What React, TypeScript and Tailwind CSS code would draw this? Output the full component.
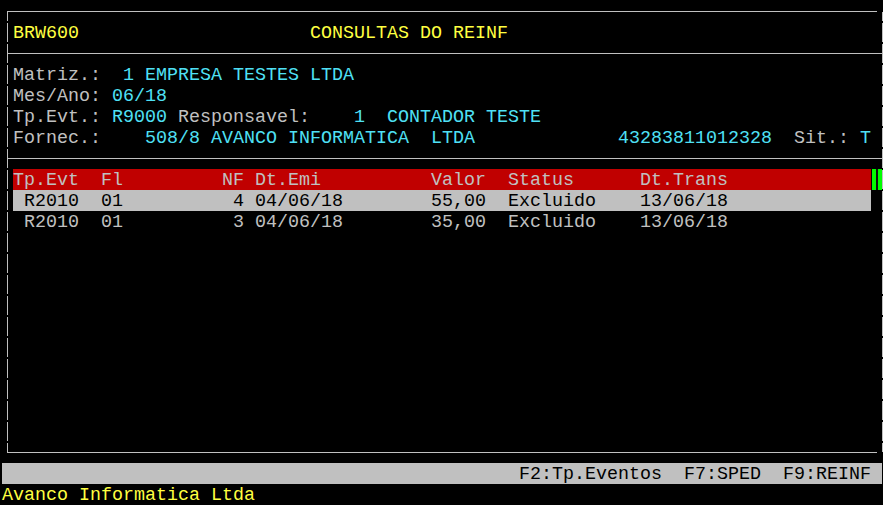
import type { ReactNode } from 'react'

const gray = 'text-[#c0c0c0]'
const cyan = 'text-[#4fe0f5]'
const yellow = 'text-[#ffff40]'

// one 80-col terminal row, 21px high
function Line({ children, className = '' }: { children?: ReactNode; className?: string }) {
  return <div className={`h-[21px] pt-px leading-[21px] whitespace-pre pl-[5px] ${className}`}>{children}</div>
}

function Sep() {
  return (
    <div className="h-[21px] pt-[10px]">
      <div className="h-px bg-[#c0c0c0]" />
    </div>
  )
}

const vline =
  'w-px shrink-0 bg-[image:repeating-linear-gradient(to_bottom,#c0c0c0_0px,#c0c0c0_9px,transparent_9px,transparent_11px,#c0c0c0_11px,#c0c0c0_21px)]'

export default function App() {
  return (
    <div className="w-[883px] h-[505px] bg-black pt-px pl-[2px] overflow-hidden font-['Liberation_Mono',monospace] text-[18.33px] leading-[21px]">
      <div className="ml-[5px] mt-[10px] w-[870px] h-[442px] border-y border-[#c0c0c0] flex">
        <div className={vline} />
        <div className="flex-1 flex flex-col pt-[10px]">
          <Line className={yellow}>{'BRW600                     CONSULTAS DO REINF'}</Line>
          <Sep />
          <Line className={gray}>
            {'Matriz.:  '}
            <span className={cyan}>1 EMPRESA TESTES LTDA</span>
          </Line>
          <Line className={gray}>
            {'Mes/Ano: '}
            <span className={cyan}>06/18</span>
          </Line>
          <Line className={gray}>
            {'Tp.Evt.: '}
            <span className={cyan}>R9000</span>
            {' Responsavel:'}
            <span className={cyan}>{'    1  CONTADOR TESTE'}</span>
          </Line>
          <Line className={gray}>
            {'Fornec.:    '}
            <span className={cyan}>{'508/8 AVANCO INFORMATICA  LTDA             43283811012328'}</span>
            {'  Sit.: '}
            <span className={cyan}>T</span>
          </Line>
          <Sep />
          <div className="h-[21px] flex">
            <div className={`ml-[5px] w-[858px] shrink-0 pt-px bg-[#c00000] whitespace-pre ${gray}`}>
              {'Tp.Evt  Fl         NF Dt.Emi          Valor  Status      Dt.Trans'}
            </div>
            <div className="relative ml-px w-[10px] shrink-0 bg-[#00ff00] flex">
              <div className="ml-[4px] w-[2px] bg-[#101010]" />
            </div>
          </div>
          <div className="h-[21px] flex">
            <div className="ml-[5px] w-[858px] shrink-0 pt-px bg-[#c0c0c0] text-black whitespace-pre">
              {' R2010  01          4 04/06/18        55,00  Excluido    13/06/18'}
            </div>
          </div>
          <Line className={gray}>{' R2010  01          3 04/06/18        35,00  Excluido    13/06/18'}</Line>
        </div>
        <div className={vline} />
      </div>
      <div className="mt-[10px] w-[880px] h-[21px] pt-px bg-[#c0c0c0] text-black flex justify-end pr-[11px] whitespace-pre">
        {'F2:Tp.Eventos  F7:SPED  F9:REINF'}
      </div>
      <div className={`h-[21px] pt-px whitespace-pre ${yellow}`}>Avanco Informatica Ltda</div>
    </div>
  )
}
